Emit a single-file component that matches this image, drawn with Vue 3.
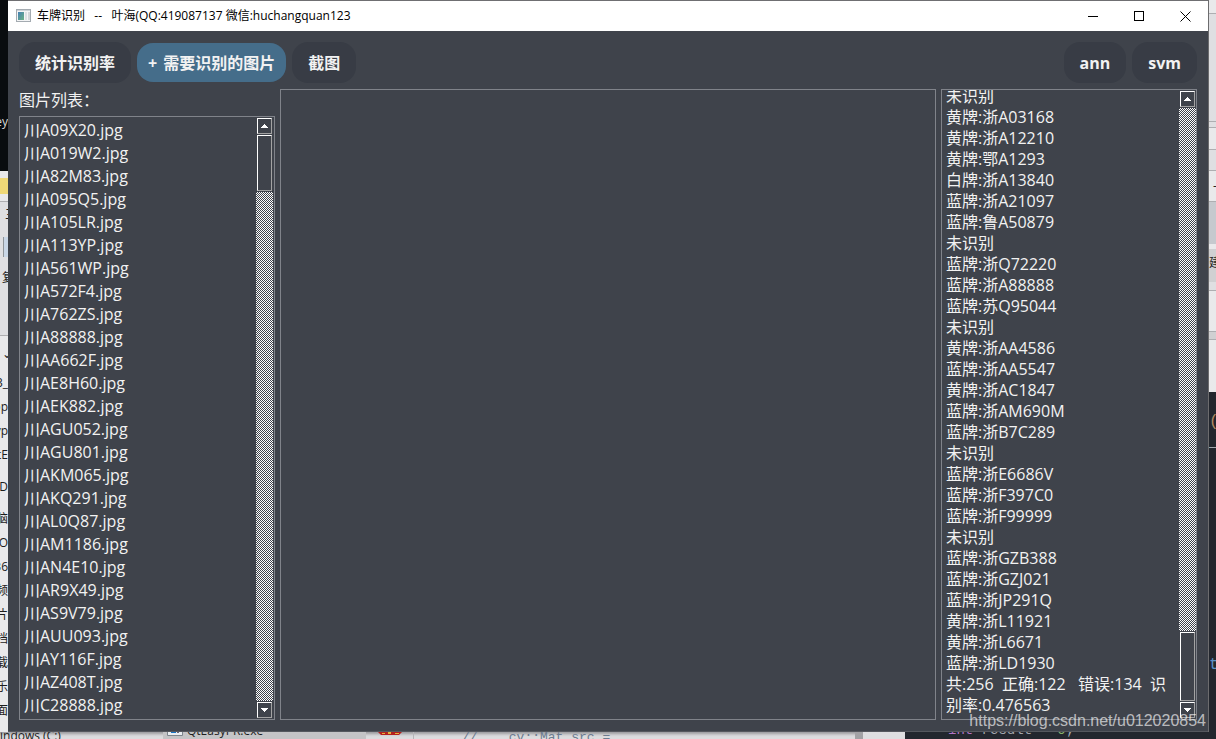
<script setup>
const title = '车牌识别\u00a0\u00a0 --\u00a0\u00a0 叶海(QQ:419087137 微信:huchangquan123'
const comment = '//\u00a0\u00a0\u00a0 cv::Mat src ='

const files = [
  'A09X20', 'A019W2', 'A82M83', 'A095Q5', 'A105LR', 'A113YP', 'A561WP', 'A572F4', 'A762ZS',
  'A88888', 'AA662F', 'AE8H60', 'AEK882', 'AGU052', 'AGU801', 'AKM065', 'AKQ291', 'AL0Q87',
  'AM1186', 'AN4E10', 'AR9X49', 'AS9V79', 'AUU093', 'AY116F', 'AZ408T', 'C28888',
].map((n) => '川' + n + '.jpg')

const results = [
  '未识别', '黄牌:浙A03168', '黄牌:浙A12210', '黄牌:鄂A1293', '白牌:浙A13840', '蓝牌:浙A21097',
  '蓝牌:鲁A50879', '未识别', '蓝牌:浙Q72220', '蓝牌:浙A88888', '蓝牌:苏Q95044', '未识别',
  '黄牌:浙AA4586', '蓝牌:浙AA5547', '黄牌:浙AC1847', '蓝牌:浙AM690M', '蓝牌:浙B7C289', '未识别',
  '蓝牌:浙E6686V', '蓝牌:浙F397C0', '蓝牌:浙F99999', '未识别', '蓝牌:浙GZB388', '蓝牌:浙GZJ021',
  '蓝牌:浙JP291Q', '黄牌:浙L11921', '黄牌:浙L6671', '蓝牌:浙LD1930',
  '共:256  正确:122   错误:134  识别率:0.476563',
]

const leftEdge = [
  { h: 110, c: 'night' }, { h: 24, c: 'night', t: 'ey' }, { h: 37, c: 'night' },
  { h: 7, c: 'pale' }, { h: 16, c: 'yellow' }, { h: 7, c: 'pale' }, { h: 1, c: 'rule' },
  { h: 26, c: 'mist start', t: '三' }, { h: 9, c: 'mist' }, { h: 20, c: 'sheet' }, { h: 9, c: 'mist' },
  { h: 24, c: 'mist near', t: '复' }, { h: 45, c: 'mist' }, { h: 1, c: 'rule' },
  { h: 35, c: 'pale near', t: '⌄' }, { h: 24, c: 'pale', t: '3_' }, { h: 24, c: 'pale', t: 'pp' },
  { h: 24, c: 'pale', t: 'yp' }, { h: 24, c: 'pale', t: 'tE' }, { h: 8, c: 'pale' },
  { h: 24, c: 'pale', t: 'eD' }, { h: 8, c: 'pale' }, { h: 24, c: 'pale', t: '电脑' },
  { h: 24, c: 'pale', t: 'O' }, { h: 24, c: 'pale', t: '36' }, { h: 24, c: 'pale', t: '频' },
  { h: 24, c: 'pale', t: '片' }, { h: 24, c: 'pale', t: '档' }, { h: 24, c: 'pale', t: '载' },
  { h: 24, c: 'pale', t: '乐' }, { h: 24, c: 'pale', t: '面' },
]
const rightEdge = [
  { h: 13, c: 'pale' }, { h: 1, c: 'rule' }, { h: 107, c: 'mist' }, { h: 1, c: 'rule' },
  { h: 5, c: 'mist' }, { h: 1, c: 'rule' }, { h: 21, c: 'pale' }, { h: 1, c: 'rule' },
  { h: 20, c: 'mist' }, { h: 1, c: 'rule' }, { h: 30, c: 'pale near', t: '-' }, { h: 1, c: 'rule' },
  { h: 42, c: 'steel' }, { h: 5, c: 'pale' }, { h: 28, c: 'grey', t: '建' }, { h: 5, c: 'grey' },
  { h: 8, c: 'mist' }, { h: 1, c: 'rule' }, { h: 40, c: 'pale' }, { h: 1, c: 'rule' },
  { h: 7, c: 'grey' }, { h: 1, c: 'rule' }, { h: 52, c: 'pale' }, { h: 20, c: 'code' },
  { h: 20, c: 'code tan', t: '(' }, { h: 20, c: 'code ash', t: '_' }, { h: 200, c: 'code' },
  { h: 26, c: 'code blue', t: 'tu' },
]
</script>

<template>
  <div class="desktop">
    <div class="edge left" aria-hidden="true">
      <div v-for="(s, i) in leftEdge" :key="i" class="bit" :class="s.c" :style="{ height: s.h + 'px' }">{{ s.t }}</div>
      <div class="bit pale rest"></div>
    </div>

    <main class="window">
      <header class="titlebar">
        <svg class="appicon" width="16" height="14" viewBox="0 0 16 14" aria-hidden="true">
          <defs>
            <linearGradient id="pane" x1="0" y1="0" x2="1" y2="1">
              <stop offset="0" stop-color="#4580b4" />
              <stop offset="1" stop-color="#6bb284" />
            </linearGradient>
          </defs>
          <rect x="0.5" y="0.5" width="14" height="12" fill="#f4f5f6" stroke="#a4abb1" />
          <rect x="1" y="1" width="13" height="1" fill="#cdd3d8" />
          <rect x="2" y="3" width="6" height="8" fill="url(#pane)" />
          <rect x="9" y="3" width="2" height="8" fill="#dde1e4" />
          <rect x="12" y="3" width="2" height="8" fill="#d3d7da" />
        </svg>
        <h1 class="title">{{ title }}</h1>
        <button class="sys" aria-label="最小化">
          <svg width="11" height="11" viewBox="0 0 11 11"><path d="M0 5.5H10" stroke="#000" /></svg>
        </button>
        <button class="sys" aria-label="最大化">
          <svg width="11" height="11" viewBox="0 0 11 11"><rect x="0.5" y="0.5" width="9" height="9" fill="none" stroke="#000" /></svg>
        </button>
        <button class="sys" aria-label="关闭">
          <svg width="11" height="11" viewBox="0 0 11 11"><path d="M0.5 0.5L10.5 10.5M10.5 0.5L0.5 10.5" stroke="#000" /></svg>
        </button>
      </header>

      <div class="toolbar">
        <button class="pill">统计识别率</button>
        <button class="pill primary"><span>+</span><span>需要识别的图片</span></button>
        <button class="pill">截图</button>
        <span class="spring"></span>
        <button class="pill">ann</button>
        <button class="pill">svm</button>
      </div>

      <div class="panels">
        <section class="files">
          <h2 id="files-label" class="label">图片列表：</h2>
          <div class="box">
            <ul class="list" aria-labelledby="files-label">
              <li v-for="f in files" :key="f">{{ f }}</li>
            </ul>
            <div class="scroll">
              <button class="cap" aria-label="向上滚动">
                <svg width="7" height="4" viewBox="0 0 7 4"><path d="M3 0h1v1h1v1h1v1h1v1H0V3h1V2h1V1h1z" fill="#fff" /></svg>
              </button>
              <div class="thumb short"></div>
              <div class="track"></div>
              <button class="cap" aria-label="向下滚动">
                <svg width="7" height="4" viewBox="0 0 7 4"><path d="M0 0h7v1H6v1H5v1H4v1H3V3H2V2H1V1H0z" fill="#fff" /></svg>
              </button>
            </div>
          </div>
        </section>

        <section class="box preview" aria-label="预览"></section>

        <section class="box results" aria-label="识别结果">
          <div class="log" role="log">
            <p v-for="(line, n) in results" :key="n">{{ line }}</p>
          </div>
          <div class="scroll">
            <button class="cap" aria-label="向上滚动">
              <svg width="7" height="4" viewBox="0 0 7 4"><path d="M3 0h1v1h1v1h1v1h1v1H0V3h1V2h1V1h1z" fill="#fff" /></svg>
            </button>
            <div class="track"></div>
            <div class="thumb long"></div>
            <button class="cap" aria-label="向下滚动">
              <svg width="7" height="4" viewBox="0 0 7 4"><path d="M0 0h7v1H6v1H5v1H4v1H3V3H2V2H1V1H0z" fill="#fff" /></svg>
            </button>
          </div>
        </section>
      </div>
    </main>

    <div class="edge right" aria-hidden="true">
      <div v-for="(s, i) in rightEdge" :key="i" class="bit" :class="s.c" :style="{ height: s.h + 'px' }">{{ s.t }}</div>
      <div class="bit code rest"></div>
    </div>

    <div class="under" aria-hidden="true">
      <div class="cell drive">indows (C:)</div>
      <div class="cell exe">
        <svg width="16" height="7" viewBox="0 0 16 7"><path d="M0.5 0V5.5H15.5V0" fill="#e9edf0" stroke="#7d858c" /><rect x="4" y="0" width="5" height="3" fill="#1674c4" /><rect x="10" y="0" width="2" height="3" fill="#667" /></svg>
        <span>QtEasyPR.exe</span>
      </div>
      <div class="cell emblem">
        <svg width="24" height="4" viewBox="0 0 24 4"><path d="M0 0H24L21 3H3z" fill="#b3211f" /><path d="M4 1h3v1H4zM10 0h3v2h-3zM17 1h4v1h-4z" fill="#e3b23c" /></svg>
      </div>
      <div class="cell source">{{ comment }}</div>
      <div class="cell bar"></div>
      <div class="cell gap"></div>
      <div class="cell dark"><span><i>int</i>&nbsp;result&nbsp;=&nbsp;<b>0</b>;</span></div>
    </div>

    <div class="watermark">https://blog.csdn.net/u012020854</div>
  </div>
</template>

<style>
html,
body {
  margin: 0;
  background: #e6e6e8;
}
</style>

<style scoped>
.desktop {
  position: relative;
  display: grid;
  grid-template-columns: 8px minmax(0, 1fr) 8px;
  grid-template-rows: minmax(0, 1fr) 7px;
  height: 100vh;
  overflow: hidden;
  font-family: "Open Sans", "Noto Sans CJK SC", sans-serif;
  font-size: 16px;
  color: #f2f2f2;
}
.edge {
  display: flex;
  flex-direction: column;
  min-height: 0;
  overflow: hidden;
  font-size: 12px;
  color: #1c1c1c;
}
.bit {
  display: flex;
  flex: none;
  align-items: center;
  overflow: hidden;
  line-height: 16px;
  white-space: nowrap;
}
.left .bit {
  justify-content: flex-end;
}
.left .start {
  justify-content: flex-start;
  padding-left: 5px;
}
.left .near {
  justify-content: flex-start;
  padding-left: 2px;
}
.right .near {
  padding-left: 4px;
}
.right {
  border-left: 1px solid #6c6c6e;
  box-sizing: border-box;
}
.rest {
  flex: 1;
}
.night { background: #090c0f; color: #d8d8d8; }
.pale { background: #e9e9eb; }
.mist { background: #dfdfe2; }
.grey { background: #d0d0d2; }
.steel { background: #c6c9ce; }
.rule { background: #aeaeb1; }
.yellow { background: #efd877; }
.sheet { background: linear-gradient(90deg, #dfdfe2 3px, #8f9499 3px, #8f9499 4px, #c9d6e6 4px); }
.code { background: #23272e; font-family: "Liberation Mono", monospace; font-size: 16px; }
.tan { color: #b08a62; }
.ash { color: #a4a8ae; }
.blue { color: #5b8fc4; }

.window {
  display: flex;
  flex-direction: column;
  min-height: 0;
  box-sizing: border-box;
  border-top: 1px solid #6f6f72;
  border-bottom: 1px solid #55585e;
  background: #3f434b;
}
.titlebar {
  display: flex;
  flex: none;
  align-items: center;
  height: 30px;
  padding-left: 8px;
  background: #fff;
  color: #000;
}
.title {
  flex: 1;
  margin: 0 0 0 5px;
  font-size: 12px;
  font-weight: 400;
  line-height: 18px;
  white-space: nowrap;
}
.sys {
  display: flex;
  align-items: center;
  justify-content: center;
  width: 46px;
  height: 30px;
  padding: 0;
  border: 0;
  background: none;
}
.toolbar {
  display: flex;
  flex: none;
  align-items: center;
  gap: 6px;
  padding: 11px 11px 6px;
}
.spring {
  flex: 1;
}
.pill {
  height: 41px;
  padding: 0 16px;
  border: 0;
  border-radius: 16px;
  background: #383c45;
  color: #f2f2f2;
  font: 700 16px/24px "Open Sans", "Noto Sans CJK SC", sans-serif;
  white-space: nowrap;
}
.primary {
  display: flex;
  gap: 6px;
  align-items: center;
  height: 39px;
  padding: 0 11px;
  background: #456d8a;
}
.panels {
  display: grid;
  flex: 1;
  grid-template-columns: 256px minmax(0, 1fr) 256px;
  gap: 5px;
  min-height: 0;
  padding: 0 11px 11px;
}
.files {
  display: flex;
  flex-direction: column;
  min-height: 0;
}
.label {
  flex: none;
  margin: 0;
  font-size: 16px;
  font-weight: 400;
  line-height: 22px;
  padding-bottom: 5px;
}
.box {
  display: flex;
  min-height: 0;
  box-sizing: border-box;
  border: 1px solid #80838a;
}
.files .box {
  flex: 1;
  padding-right: 1px;
}
.list {
  flex: 1;
  margin: 0;
  padding: 2px 0 0 4px;
  overflow: hidden;
  list-style: none;
  line-height: 23px;
}
.list li {
  height: 23px;
  white-space: nowrap;
}
.log {
  display: flex;
  flex: 1;
  flex-direction: column;
  justify-content: flex-end;
  padding: 0 8px 3px 4px;
  overflow: hidden;
  line-height: 21px;
}
.log p {
  flex: none;
  margin: 0;
  white-space: pre-wrap;
  word-break: break-all;
}
.scroll {
  display: flex;
  flex: none;
  flex-direction: column;
  gap: 1px;
  width: 17px;
  padding: 1px 0;
}
.cap,
.thumb {
  flex: none;
  box-sizing: border-box;
  width: 15px;
  border: 1px solid;
  border-color: #fff #a3a3a3 #a3a3a3 #fff;
  margin: 0 1px;
  background: #3f434b;
}
.cap {
  display: flex;
  align-items: center;
  justify-content: center;
  height: 16px;
  padding: 0;
}
.short {
  height: 56px;
}
.long {
  height: 69px;
}
.track {
  flex: 1;
  background: repeating-conic-gradient(#fff 0 25%, #3f434b 0 50%) 0 0 / 2px 2px;
}

.under {
  display: flex;
  grid-column: 1 / -1;
  min-width: 0;
  overflow: hidden;
  background: #dcdcde;
  box-shadow: inset 0 3px 3px -1px #9a9a9d;
  font-size: 12px;
  line-height: 12px;
  color: #1c1c1c;
}
.cell {
  display: flex;
  flex: none;
  box-sizing: border-box;
  height: 7px;
  overflow: hidden;
  white-space: nowrap;
}
.drive {
  width: 163px;
  line-height: 8px;
}
.exe {
  gap: 4px;
  align-items: flex-end;
  width: 203px;
  padding: 0 0 2px 4px;
  background: #c4c4c6;
}
.emblem {
  width: 48px;
  padding-left: 12px;
  border-right: 1px solid #b5b5b8;
}
.source {
  flex: 1;
  padding-left: 48px;
  font: 13px/12px "Liberation Mono", monospace;
  color: #6d7c90;
}
.bar { width: 8px; background: #a2a2a5; }
.gap { width: 42px; background: #dedee0; }
.dark {
  align-items: flex-end;
  width: 311px;
  padding: 0 0 1px 43px;
  background: #23272e;
  font: 14px/16px "Liberation Mono", monospace;
  color: #a4a8ae;
}
.dark i { color: #b073c4; font-style: normal; }
.dark b { color: #86b36b; font-weight: 400; }
.watermark {
  position: absolute;
  right: 10px;
  bottom: 8px;
  font: 16px/20px "Liberation Sans", Arial, sans-serif;
  color: rgba(255, 255, 255, 0.65);
}
</style>
